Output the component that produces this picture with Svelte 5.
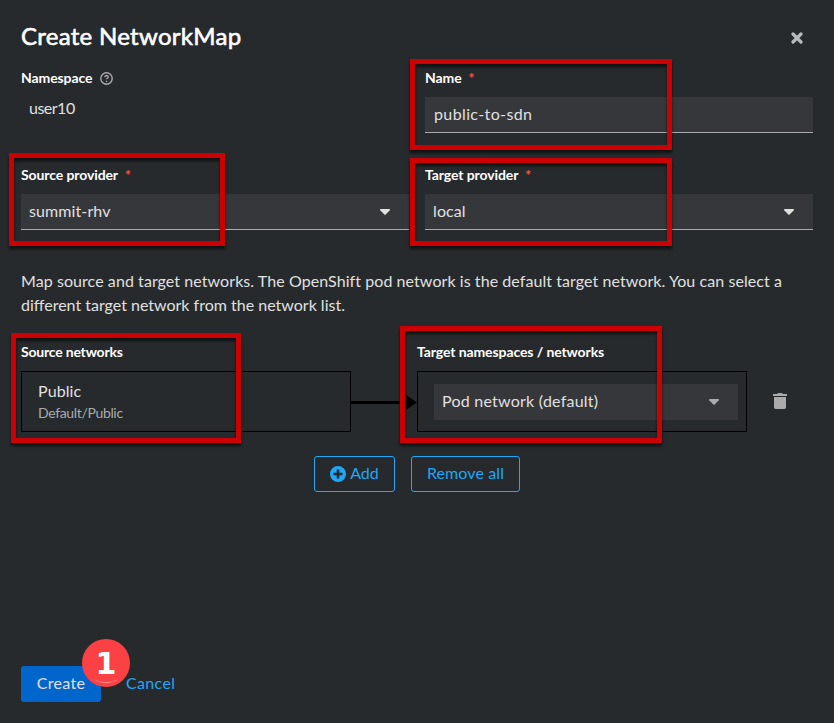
<script>
  const highlights = [
    { x: 410, y: 59, w: 262, h: 91 },
    { x: 9, y: 153, w: 216, h: 93 },
    { x: 410, y: 158, w: 262, h: 88 },
    { x: 11, y: 333, w: 230, h: 110 },
    { x: 400, y: 326, w: 262, h: 117 }
  ];
  let name = $state('public-to-sdn');
</script>

{#snippet caret()}
  <svg class="caret" width="10" height="6" viewBox="0 0 10 6"><path d="M.8 0h8.4c.7 0 1 .8.6 1.3L5.7 5.5a1 1 0 0 1-1.4 0L.2 1.3C-.2.8.1 0 .8 0z" /></svg>
{/snippet}

<main class="modal">
  <header>
    <h1>Create NetworkMap</h1>
    <button class="close" aria-label="Close">
      <svg width="12" height="12" viewBox="0 0 12 12"><path d="M2 2l8 8M10 2L2 10" /></svg>
    </button>
  </header>

  <div class="fields">
    <div class="field">
      <div class="label"><span>Namespace</span>
        <svg class="help" width="13" height="13" viewBox="0 0 13 13"><circle cx="6.5" cy="6.5" r="5.7" /><path d="M4.8 5.2c0-2.3 3.6-2.1 3.4 0C8.1 6.3 6.6 6.2 6.6 7.3" /><path d="M6.5 8.7v1.2" /></svg>
      </div>
      <div class="static"><span>user10</span></div>
    </div>
    <div class="field">
      <div class="label"><span>Name</span><b>*</b></div>
      <input class="control" bind:value={name} aria-label="Name" />
    </div>
    <div class="field">
      <div class="label"><span>Source provider</span><b>*</b></div>
      <div class="control select"><span>summit-rhv</span>{@render caret()}</div>
    </div>
    <div class="field">
      <div class="label"><span>Target provider</span><b>*</b></div>
      <div class="control select"><span>local</span>{@render caret()}</div>
    </div>
  </div>

  <p><span class="wide">Map source and target networks. The OpenShift pod network is the default target network. You can select a</span><br /><span>different target network from the network list.</span></p>

  <div class="mapping">
    <section>
      <div class="label tight"><span>Source networks</span></div>
      <div class="box source"><span>Public</span><small>Default/Public</small></div>
    </section>
    <svg class="arrow" width="66" height="15" viewBox="0 0 66 15"><path d="M0 6h55V0l11 7.5L55 15V9H0z" /></svg>
    <section>
      <div class="label"><span>Target namespaces / networks</span></div>
      <div class="box target">
        <div class="control select plain"><span>Pod network (default)</span>{@render caret()}</div>
      </div>
    </section>
    <button class="trash" aria-label="Remove mapping">
      <svg width="14" height="16" viewBox="0 0 14 16"><path d="M.5 1h3.7L5 0h4l.8 1h3.7c.3 0 .5.2.5.5V3H0V1.500C0 1.200.2 1 .5 1zM1 4h12v10.300c0 1-.8 1.700-1.700 1.700H2.700C1.800 16 1 15.300 1 14.300z" /></svg>
    </button>
  </div>

  <div class="actions">
    <button class="outline add">
      <svg width="16" height="16" viewBox="0 0 16 16"><path fill-rule="evenodd" d="M8 0a8 8 0 1 0 0 16A8 8 0 0 0 8 0zM6.700 3.500h2.600v3.200h3.200v2.600H9.300v3.200H6.700V9.300H3.500V6.700h3.200z" /></svg>
      <span>Add</span>
    </button>
    <button class="outline remove"><span>Remove all</span></button>
  </div>

  <footer>
    <button class="primary"><span>Create</span></button>
    <button class="link"><span>Cancel</span></button>
  </footer>

  {#each highlights as h}
    <div class="highlight" style="left:{h.x}px;top:{h.y}px;width:{h.w}px;height:{h.h}px"></div>
  {/each}
  <svg class="step" width="50" height="50" viewBox="0 0 50 50">
    <circle cx="25" cy="25" r="24" fill="#fc4144" />
    <path d="M13 41.500Q25 49 37 41.500Q25 46.500 13 41.500z" fill="#ff8585" />
    <text x="25" y="36" text-anchor="middle">1</text>
  </svg>
</main>

<style>
  :global(body) { background: #262a2d; }
  .modal {
    position: relative;
    box-sizing: border-box;
    width: 834px;
    height: 723px;
    padding: 18px 21px 21px;
    display: flex;
    flex-direction: column;
    background: #262a2d;
    color: #e0e0e0;
    font: 16px/24px Lato, "Liberation Sans", sans-serif;
    overflow: hidden;
  }
  span, small { white-space: nowrap; }
  button { font: inherit; margin: 0; padding: 0; border: 0; background: none; display: flex; align-items: center; justify-content: center; }
  header { display: flex; justify-content: space-between; height: 49px; }
  h1 { margin: 0; color: #fff; font-size: 24px; line-height: 36px; font-weight: 400; -webkit-text-stroke: .6px #fff; letter-spacing: .28px; white-space: nowrap; }
  .close { width: 12px; height: 12px; margin: 14px 10px 0 0; }
  .close svg { flex: none; }
  .close path { stroke: #b8babc; stroke-width: 3.200; stroke-linecap: round; fill: none; }
  .fields { display: grid; grid-template-columns: 388px 388px; column-gap: 16px; grid-template-rows: 97px 66px; }
  .label { height: 30px; line-height: 21px; display: flex; color: #fff; font-size: 14px; font-weight: 700; letter-spacing: -.1px; }
  .tight { letter-spacing: -.2px; }
  .label b { color: #fa4f42; margin-left: 7px; }
  .help { margin: 5px 0 0 8px; fill: none; stroke: #aaabac; stroke-width: 1.400; }
  .static { padding: 0 8px; line-height: 24px; letter-spacing: -.5px; margin-top: -1px; }
  .control { box-sizing: border-box; width: 388px; height: 36px; background: #36373a; border: 0; border-bottom: 1px solid #aaabac; padding: 0 8px; color: #e0e0e0; font: inherit; display: flex; align-items: center; outline: 0; border-radius: 0; }
  input.control { padding: 0 9px 2px; letter-spacing: .38px; }
  .select { justify-content: space-between; padding-right: 19px; letter-spacing: .1px; }
  .select span, .outline span, .primary span, .link span { padding-bottom: 2px; }
  .caret { fill: #e0e0e0; }
  p { margin: 39px 0 24px; }
  .wide { letter-spacing: .07px; }
  .mapping { display: flex; }
  .box { box-sizing: border-box; width: 330px; height: 61px; border: 1px solid #000; }
  .source { padding: 7px 16px; display: flex; flex-direction: column; letter-spacing: .1px; }
  small { font-size: 14px; line-height: 21px; margin-top: -1px; color: #aaabac; letter-spacing: -.34px; }
  .arrow { margin-top: 54px; fill: #000; }
  .target { padding: 12px 8px 0 16px; }
  .plain { width: 304px; border: 0; letter-spacing: .24px; }
  .plain .caret { fill: #aaabac; }
  .trash { width: 14px; height: 16px; margin: 52px 0 0 26px; fill: #aaabac; }
  .actions { display: flex; gap: 16px; margin: 24px 0 0 293px; }
  .outline { box-sizing: border-box; height: 36px; border: 1px solid #1fa7f8; border-radius: 3px; color: #1fa7f8; fill: #1fa7f8; }
  .add { width: 81px; gap: 4px; }
  .remove { width: 109px; letter-spacing: .12px; }
  footer { display: flex; margin-top: auto; }
  footer button { letter-spacing: .35px; }
  .primary { width: 80px; height: 36px; background: #06c; color: #e0e0e0; border-radius: 3px; }
  .link { color: #1fa7f8; margin-left: 25px; }
  .highlight { position: absolute; box-sizing: border-box; border: 5px solid #c00; filter: drop-shadow(0 3px 1.500px rgba(0, 0, 0, .6)); }
  .step { position: absolute; left: 81px; top: 638px; }
  .step text { font: 700 30px "DejaVu Sans", sans-serif; fill: #fff; }
</style>
